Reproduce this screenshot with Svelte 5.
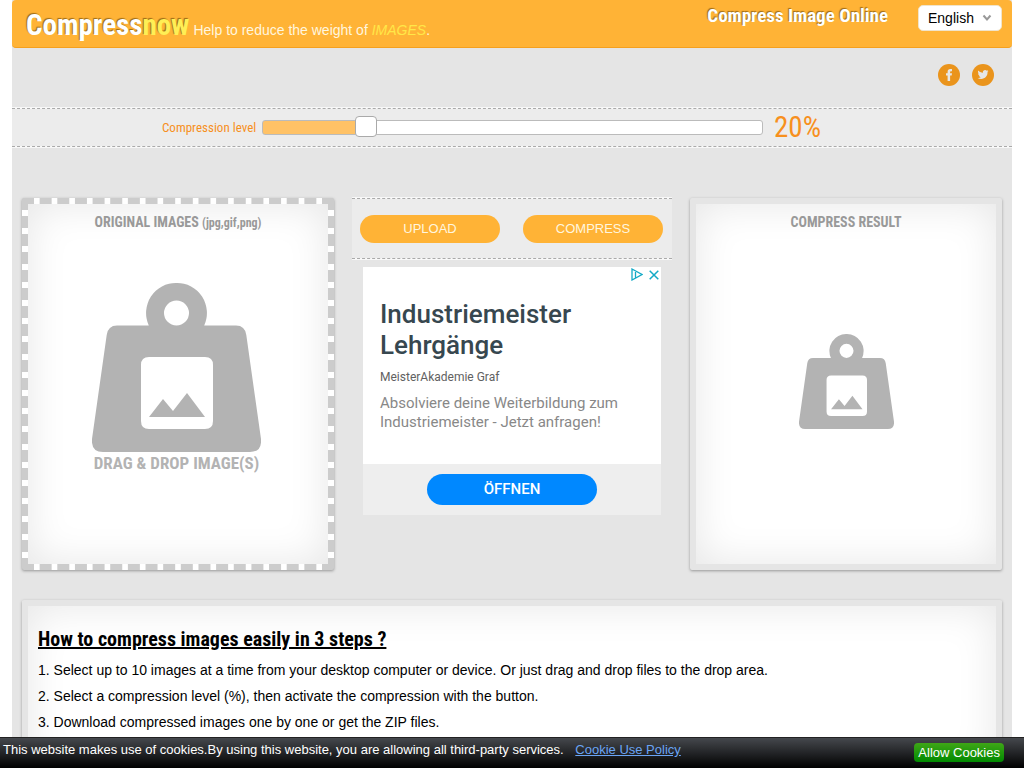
<script>
  let level = $state(20);
  const min = 1;
  const max = 100;
  let share = $derived((level - min) / (max - min));
  const steps = [
    'Select up to 10 images at a time from your desktop computer or device. Or just drag and drop files to the drop area.',
    'Select a compression level (%), then activate the compression with the button.',
    'Download compressed images one by one or get the ZIP files.'
  ];
</script>

{#snippet weight()}
  <svg class="weight" viewBox="0 0 169 169" aria-hidden="true">
    <path fill="#b3b3b3" fill-rule="evenodd" d="M84.500 0a30 30 0 0 1 27.700 42.500H144Q153 42.500 154.300 52L169 156Q170 169 158 169H11Q-1 169 0 156L14.700 52Q16 42.500 25 42.500H56.800A30 30 0 0 1 84.500 0ZM84.500 17.500a12.500 12.500 0 1 0 0 25a12.500 12.500 0 1 0 0-25ZM57 74Q49 74 49 82V138Q49 146 57 146H113Q121 146 121 138V82Q121 74 113 74Z" />
    <path fill="#b3b3b3" d="M57 134L71 116L81 128L95 110L113 134Z" />
  </svg>
{/snippet}

<div class="page">
  <header>
    <div class="brand">
      <a class="logo" href="#home">Compress<span>now</span></a>
      <p>Help to reduce the weight of <em>IMAGES</em>.</p>
    </div>
    <h1>Compress Image Online</h1>
    <div class="lang">
      <select aria-label="Language">
        <option>English</option>
        <option>Français</option>
        <option>Deutsch</option>
      </select>
      <svg viewBox="0 0 10 8" aria-hidden="true"><path d="M1.500 1.500L5 5.500L8.500 1.500" fill="none" stroke="#999" stroke-width="2" /></svg>
    </div>
  </header>

  <nav>
    <a href="#facebook" aria-label="Facebook">
      <svg viewBox="0 0 22 22"><circle cx="11" cy="11" r="11" fill="#ea941c" /><path fill="#e6e6e6" d="M9.600 17V11.600H8V9.300H9.600V7.900C9.600 5.900 10.600 5 12.300 5H14V7.300H12.900C12.300 7.300 12.100 7.600 12.100 8.100V9.300H14L13.700 11.600H12.100V17Z" /></svg>
    </a>
    <a href="#twitter" aria-label="Twitter">
      <svg viewBox="0 0 22 22"><circle cx="11" cy="11" r="11" fill="#ea941c" /><path fill="#e6e6e6" d="M16.500 7.200c-.4.200-.8.300-1.200.3.400-.3.800-.7.900-1.200-.4.300-.9.400-1.400.5a2.250 2.250 0 0 0-3.900 2C9 8.700 7.400 7.800 6.300 6.500c-.6 1-.3 2.300.7 3-.4 0-.7-.1-1-.3 0 1.100.7 2 1.800 2.300-.3.100-.7.100-1 0 .3.900 1.100 1.500 2.100 1.600-.9.700-2.100 1.100-3.300.9 1 .7 2.200 1 3.500 1 4.200 0 6.600-3.500 6.400-6.700.4-.3.700-.7 1-1.100Z" /></svg>
    </a>
  </nav>

  <section class="level strip">
    <label for="level">Compression level</label>
    <input id="level" type="range" {min} {max} bind:value={level} style:--share={share} />
    <output for="level">{level}%</output>
  </section>

  <main>
    <section class="box drop">
      <h2>ORIGINAL IMAGES <small>(jpg,gif,png)</small></h2>
      <div class="big">
        {@render weight()}
        <p>DRAG &amp; DROP IMAGE(S)</p>
      </div>
    </section>

    <div class="middle">
      <div class="actions strip">
        <button type="button">UPLOAD</button>
        <button type="button">COMPRESS</button>
      </div>
      <aside>
        <div class="marks">
          <svg viewBox="0 0 12 13" aria-hidden="true"><path d="M1 1L11 6.500L1 12Z M4.500 4V9.500" fill="none" stroke="#12aac6" stroke-width="1.300" /></svg>
          <button type="button" aria-label="Close">
            <svg viewBox="0 0 10 10"><path d="M.7 .7L9.300 9.300M9.300 .7L.7 9.300" stroke="#12aac6" stroke-width="1.500" /></svg>
          </button>
        </div>
        <div class="copy">
          <h3>Industriemeister Lehrgänge</h3>
          <h4>MeisterAkademie Graf</h4>
          <p>Absolviere deine Weiterbildung zum Industriemeister - Jetzt anfragen!</p>
        </div>
        <div class="open"><a href="#open">ÖFFNEN</a></div>
      </aside>
    </div>

    <section class="box result">
      <h2>COMPRESS RESULT</h2>
      <div class="small">{@render weight()}</div>
    </section>
  </main>

  <section class="box how">
    <h2>How to compress images easily in 3 steps ?</h2>
    <ol>
      {#each steps as step}
        <li>{step}</li>
      {/each}
    </ol>
  </section>
</div>

<div class="cookies">
  <p>This website makes use of cookies.By using this website, you are allowing all third-party services. <a href="#policy">Cookie Use Policy</a></p>
  <button type="button">Allow Cookies</button>
</div>

<style>
  :global(body) {
    background: #fff;
    color: #000;
    font-family: "Liberation Sans", Arial, sans-serif;
    font-size: 14px;
  }
  * { box-sizing: border-box; }
  h1, h2, h3, h4, p, ol { margin: 0; }
  .page {
    display: flex;
    flex-direction: column;
    min-height: 100vh;
    margin: 0 12px;
    background: #e5e5e5;
  }
  .logo, h1, h2, label, output, .big p {
    font-family: "Ubuntu Condensed", "Roboto Condensed", "Open Sans Condensed", Lato, sans-serif;
  }
  header {
    display: flex;
    align-items: flex-start;
    height: 48px;
    padding: 0 10px 0 14px;
    background: #ffb336;
    border-bottom: 1px solid #f5a01e;
    border-radius: 4px;
  }
  .brand {
    display: flex;
    flex: 1;
    align-items: baseline;
    gap: 4px;
  }
  .logo {
    color: #fff;
    font-size: 29px;
    font-weight: bold;
    line-height: 50px;
    text-decoration: none;
    text-shadow: -1px -1px 1px #9c6b16;
  }
  .logo span { color: #ffee55; }
  .brand p { color: #fff6df; }
  em { color: #ffe748; }
  h1 {
    margin-right: 30px;
    color: #fff;
    font-size: 19px;
    line-height: 32px;
    text-shadow: -1px -1px 1px #9c6b16;
  }
  .lang {
    position: relative;
    margin-top: 5px;
  }
  .lang select {
    display: block;
    width: 84px;
    height: 26px;
    padding: 0 9px;
    appearance: none;
    background: #fff;
    border: 1px solid #f0e4cc;
    border-radius: 5px;
    color: #000;
    font: 14px "Liberation Sans", Arial, sans-serif;
  }
  .lang svg {
    position: absolute;
    top: 9px;
    right: 10px;
    width: 10px;
    height: 8px;
    pointer-events: none;
  }
  nav {
    display: flex;
    justify-content: flex-end;
    gap: 12px;
    height: 60px;
    padding: 16px 18px 0 0;
  }
  nav svg { display: block; width: 22px; height: 22px; }
  .strip {
    background: #ececec;
    border: 1px dashed #aaa;
    border-width: 1px 0;
    background-clip: padding-box;
    box-shadow: 0 1px #f8f8f8, 0 -1px #f8f8f8;
  }
  .level {
    display: flex;
    align-items: center;
    height: 39px;
    padding: 0 190px 0 150px;
  }
  label {
    width: 94px;
    margin-right: 6px;
    color: #f7901e;
    font-size: 13px;
    white-space: nowrap;
  }
  input {
    flex: 1;
    min-width: 0;
    height: 21px;
    margin: 0 11px 0 0;
    appearance: none;
    background: none;
  }
  input::-webkit-slider-runnable-track {
    height: 15px;
    border: 1px solid #bbb;
    border-radius: 3px;
    background: linear-gradient(#ffc266, #ffc266) 0 0 / calc(11px + (100% - 22px) * var(--share)) 100% no-repeat, #fff;
  }
  input::-webkit-slider-thumb {
    width: 22px;
    height: 21px;
    margin-top: -5px;
    appearance: none;
    background: #fff;
    border: 1px solid #aaa;
    border-radius: 4px;
  }
  output {
    width: 48px;
    color: #f7901e;
    font-size: 29px;
    line-height: 37px;
    white-space: nowrap;
  }
  main {
    display: grid;
    grid-template-columns: 1fr 320px 1fr;
    gap: 18px;
    margin: 51px 10px 0;
  }
  .box {
    background: #fff;
    border: 6px solid #e5e5e5;
    border-radius: 2px;
    box-shadow: 0 1px 3px rgba(0, 0, 0, 0.35), inset 0 0 40px rgba(0, 0, 0, 0.1);
  }
  .box h2 { line-height: 36px; }
  .drop, .result {
    display: flex;
    flex-direction: column;
    min-height: 372px;
    text-align: center;
  }
  .drop { border: 6px dashed #ccc; }
  .drop h2, .result h2 {
    color: #999;
    font-size: 14px;
  }
  .drop small { font-size: 12px; }
  .weight { display: block; margin: 0 auto; }
  .big { padding: 42px 3px 0 0; }
  .big .weight { width: 169px; height: 169px; }
  .big p {
    color: #b3b3b3;
    font-size: 17px;
    font-weight: bold;
    line-height: 22px;
  }
  .small { padding-top: 94px; }
  .small .weight { width: 95px; height: 95px; }
  .actions {
    display: grid;
    grid-template-columns: 1fr 1fr;
    gap: 23px;
    align-items: center;
    height: 61px;
    padding: 0 9px 0 8px;
  }
  .actions button {
    height: 28px;
    background: #ffb336;
    border: 0;
    border-radius: 14px;
    color: #fff6df;
    font: 13px "Liberation Sans", Arial, sans-serif;
  }
  aside {
    margin: 8px 11px 0;
    background: #fff;
    font-family: Roboto, sans-serif;
  }
  .marks {
    display: flex;
    justify-content: flex-end;
    align-items: center;
    gap: 6px;
    height: 15px;
    padding-right: 2px;
  }
  .marks svg { display: block; width: 12px; height: 13px; }
  .marks button { padding: 0; background: none; border: 0; }
  .marks button svg { width: 10px; height: 10px; }
  .copy { height: 182px; padding: 17px 17px 0; }
  h3 {
    color: #37474f;
    font-size: 26px;
    font-weight: 500;
    line-height: 31px;
  }
  h4 {
    margin: 8px 0 9px;
    color: #616161;
    font-size: 12px;
    font-weight: 400;
    line-height: 16px;
  }
  .copy p {
    color: #888;
    font-size: 15px;
    line-height: 19px;
  }
  .open {
    display: flex;
    justify-content: center;
    padding: 10px;
    background: #eee;
  }
  .open a {
    width: 170px;
    background: #0088ff;
    border-radius: 16px;
    color: #fff;
    font-size: 15px;
    font-weight: 500;
    line-height: 31px;
    text-align: center;
    text-decoration: none;
  }
  .how {
    flex: 1;
    margin: 30px 10px 0;
    padding: 15px 10px 40px;
    border-bottom: 0;
  }
  .how h2 {
    font-size: 20px;
    text-decoration: underline;
  }
  ol { padding: 0; list-style-position: inside; line-height: 26px; }
  .cookies {
    position: fixed;
    right: 0;
    bottom: 0;
    left: 0;
    display: flex;
    align-items: flex-start;
    justify-content: space-between;
    height: 31px;
    padding: 0 20px 0 3px;
    background: linear-gradient(#45484d, #000);
    border-top: 1px solid #222;
    color: #fff;
    font-size: 13px;
    line-height: 24px;
  }
  .cookies a { margin-left: 8px; color: #6aa5f5; }
  .cookies button {
    height: 19px;
    margin-top: 5px;
    padding: 0 4px;
    background: linear-gradient(#3fa617, #008a00);
    border: 0;
    border-radius: 4px;
    color: #fff;
    font: 13px "Liberation Sans", Arial, sans-serif;
  }
</style>
